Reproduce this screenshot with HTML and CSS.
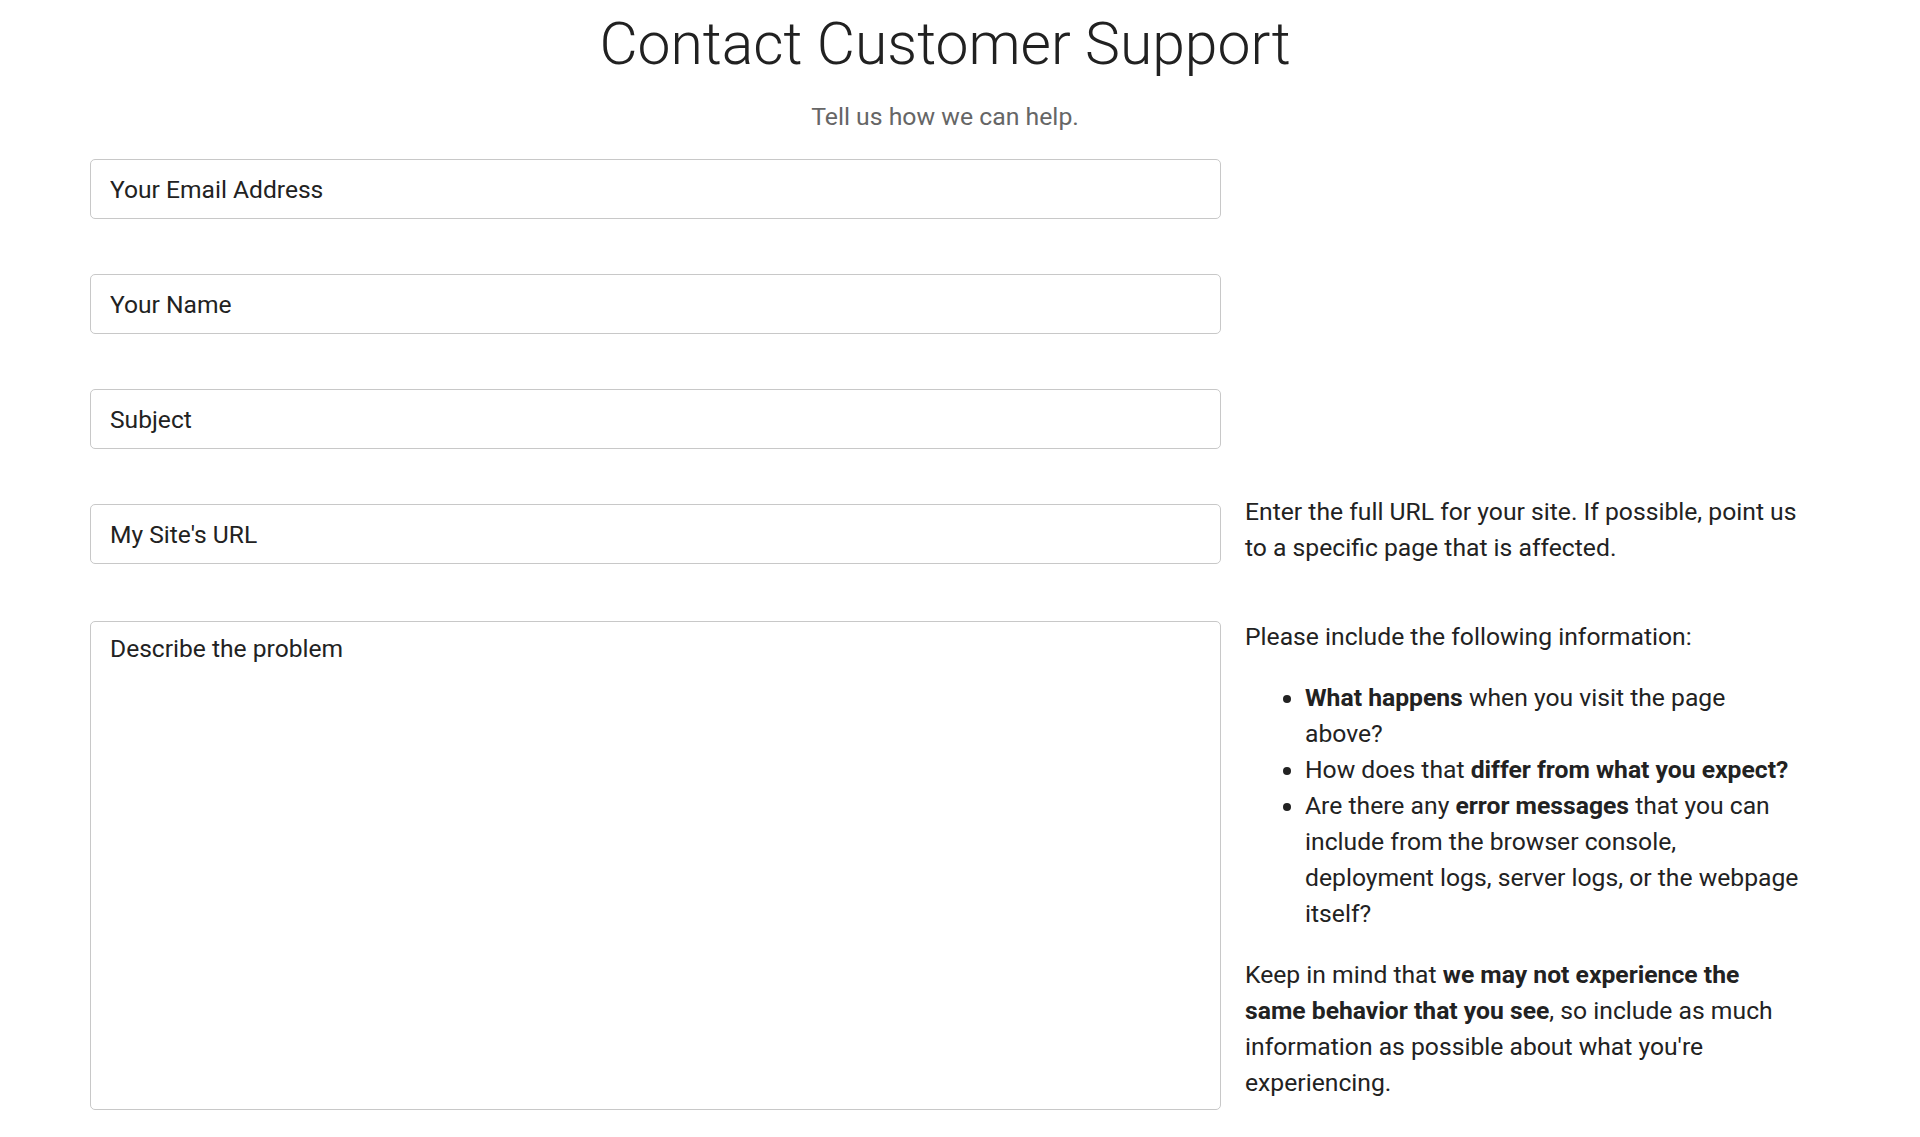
FILE: index.html
```html
<!DOCTYPE html>
<html lang="en">
<head>
<meta charset="utf-8">
<title>Contact Customer Support</title>
<link rel="stylesheet" href="styles.css">
</head>
<body>
<main class="page">
  <h1 class="title">Contact Customer Support</h1>
  <p class="subtitle">Tell us how we can help.</p>
  <form class="form">
    <div class="row">
      <input class="field" type="email" placeholder="Your Email Address">
    </div>
    <div class="row">
      <input class="field" type="text" placeholder="Your Name">
    </div>
    <div class="row">
      <input class="field" type="text" placeholder="Subject">
    </div>
    <div class="row">
      <input class="field" type="url" placeholder="My Site's URL">
      <div class="help help-url">
        <p>Enter the full URL for your site. If possible, point us to a specific page that is affected.</p>
      </div>
    </div>
    <div class="row">
      <textarea class="field area" placeholder="Describe the problem"></textarea>
      <div class="help help-area">
        <p>Please include the following information:</p>
        <ul>
          <li><strong>What happens</strong> when you visit the page above?</li>
          <li>How does that <strong>differ from what you expect?</strong></li>
          <li>Are there any <strong>error messages</strong> that you can include from the browser console, deployment logs, server logs, or the webpage itself?</li>
        </ul>
        <p>Keep in mind that <strong>we may not experience the same behavior that you see</strong>, so include as much information as possible about what you're experiencing.</p>
      </div>
    </div>
  </form>
</main>
</body>
</html>
```
FILE: styles.css
```css
html, body {
  margin: 0;
  padding: 0;
  background: #ffffff;
}
body {
  font-family: Roboto, "Liberation Sans", Arial, sans-serif;
  color: #222222;
  font-size: 24.7px;
  line-height: 36px;
}
.page {
  padding: 8px 120px 0 90px;
}
.title {
  margin: 0;
  text-align: center;
  font-size: 58.8px;
  line-height: 72px;
  font-weight: 300;
  color: #212121;
}
.subtitle {
  margin: 19px 0 0;
  text-align: center;
  font-size: 24.8px;
  line-height: 36px;
  color: #666666;
}
.form {
  margin-top: 24px;
  display: flex;
  flex-direction: column;
  gap: 55px;
}
.row {
  display: grid;
  grid-template-columns: 1131px 1fr;
  column-gap: 24px;
  align-items: start;
}
.field {
  box-sizing: border-box;
  width: 100%;
  height: 60px;
  margin: 0;
  padding: 0 19px;
  border: 1px solid #c8c8c8;
  border-radius: 5px;
  background: #fff;
  font-family: Roboto, "Liberation Sans", Arial, sans-serif;
  font-size: 24.6px;
  color: #222;
  outline: none;
}
.field::placeholder {
  color: #222;
  opacity: 1;
}
.area {
  height: 489px;
  padding-top: 12px;
  resize: none;
  line-height: normal;
  display: block;
}
.help p {
  margin: 0;
}
.help-url {
  margin-top: -10px;
}
.help-area {
  margin-top: -2px;
}
.help ul {
  margin: 25px 0;
  padding-left: 60px;
}
.help strong {
  font-weight: 700;
}
```
